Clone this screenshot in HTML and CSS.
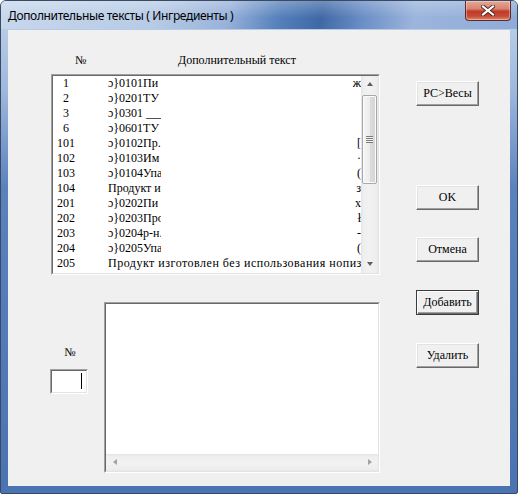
FILE: index.html
```html
<!DOCTYPE html>
<html lang="ru">
<head>
<meta charset="utf-8">
<title>Дополнительные тексты</title>
<link rel="stylesheet" href="styles.css">
</head>
<body>
<div class="window">
  <div class="titlebar">
    <span class="title">Дополнительные тексты ( Ингредиенты )</span>
    <div class="close">
      <svg width="14" height="11" viewBox="0 0 14 11">
        <path d="M2 1.5 L12 9.5 M12 1.5 L2 9.5" stroke="#4a2420" stroke-width="4" stroke-linecap="square"/>
        <path d="M2 1.5 L12 9.5 M12 1.5 L2 9.5" stroke="#ffffff" stroke-width="2.2" stroke-linecap="square"/>
      </svg>
    </div>
  </div>
  <div class="client">
    <div class="left">
      <div class="list-header">
        <span class="h-num">№</span>
        <span class="h-text">Дополнительный текст</span>
      </div>
      <div class="listbox">
        <div class="listbox-inner">
          <div class="rows">
            <div class="row"><span class="c-num">  1</span><span class="c-text">ɔ}0101Пи</span><span class="c-tail">ж</span></div>
            <div class="row"><span class="c-num">  2</span><span class="c-text">ɔ}0201ТУ</span><span class="c-tail"></span></div>
            <div class="row"><span class="c-num">  3</span><span class="c-text">ɔ}0301 ____</span><span class="c-tail"></span></div>
            <div class="row"><span class="c-num">  6</span><span class="c-text">ɔ}0601ТУ</span><span class="c-tail"></span></div>
            <div class="row"><span class="c-num">101</span><span class="c-text">ɔ}0102Пр.</span><span class="c-tail">[</span></div>
            <div class="row"><span class="c-num">102</span><span class="c-text">ɔ}0103Им</span><span class="c-tail">·</span></div>
            <div class="row"><span class="c-num">103</span><span class="c-text">ɔ}0104Упак</span><span class="c-tail">(</span></div>
            <div class="row"><span class="c-num">104</span><span class="c-text">Продукт из</span><span class="c-tail">з</span></div>
            <div class="row"><span class="c-num">201</span><span class="c-text">ɔ}0202Пи</span><span class="c-tail">х</span></div>
            <div class="row"><span class="c-num">202</span><span class="c-text">ɔ}0203Про</span><span class="c-tail">ł</span></div>
            <div class="row"><span class="c-num">203</span><span class="c-text">ɔ}0204р-н.</span><span class="c-tail">-</span></div>
            <div class="row"><span class="c-num">204</span><span class="c-text">ɔ}0205Упа</span><span class="c-tail">(</span></div>
            <div class="row"><span class="c-num">205</span><span class="c-full">Продукт изготовлен без использования нопиз</span></div>
            <div class="row"><span class="c-num">206</span><span class="c-text">ɔ}0206Пи</span><span class="c-tail">П</span></div>
          </div>
          <div class="vscroll">
            <div class="sb-btn"><span class="arr-up"></span></div>
            <div class="sb-track">
              <div class="thumb"><span class="grip"></span></div>
            </div>
            <div class="sb-btn"><span class="arr-down"></span></div>
          </div>
        </div>
      </div>
      <div class="bottom">
        <div class="numbox">
          <div class="num-label">№</div>
          <div class="edit"><div class="edit-inner"><span class="caret"></span></div></div>
        </div>
        <div class="memo">
          <div class="memo-inner">
            <div class="memo-area"></div>
            <div class="hscroll">
              <div class="hsb-btn"><span class="arr-left"></span></div>
              <div class="hsb-track"></div>
              <div class="hsb-btn"><span class="arr-right"></span></div>
            </div>
          </div>
        </div>
      </div>
    </div>
    <div class="buttons">
      <div class="btn b-pc">PC&gt;Весы</div>
      <div class="btn b-ok">OK</div>
      <div class="btn b-cancel">Отмена</div>
      <div class="btn btn-default b-add">Добавить</div>
      <div class="btn b-del">Удалить</div>
    </div>
  </div>
</div>
</body>
</html>
```

FILE: styles.css
```css
html, body {
  margin: 0;
  padding: 0;
  background: #ffffff;
}
body {
  width: 518px;
  height: 494px;
  overflow: hidden;
}
.window {
  box-sizing: border-box;
  width: 518px;
  height: 494px;
  border: 1px solid #3a4a63;
  border-radius: 6px 6px 2px 2px;
  background: linear-gradient(to bottom, #c3d4ea 0%, #9fb8dd 18%, #5a82bd 38%, #4a73b1 100%);
  padding: 0 7px 7px 7px;
  display: flex;
  flex-direction: column;
}
.titlebar {
  height: 28px;
  margin: 0 -7px;
  padding: 0 7px 0 7px;
  display: flex;
  justify-content: space-between;
  align-items: flex-start;
  border-radius: 5px 5px 0 0;
  background:
    linear-gradient(to bottom, rgba(255,255,255,0.25), rgba(255,255,255,0) 60%),
    linear-gradient(100deg, #c7d7ec 0%, #b7cbe6 30%, #98b2da 44%, #5580bb 54%, #3f69a6 62%, #6a8ec6 70%, #9bb5dc 80%, #8fabd7 100%);
}
.title {
  font-family: "Noto Sans", "DejaVu Sans", sans-serif;
  font-size: 12px;
  color: #000000;
  line-height: 16px;
  margin-top: 7px;
  letter-spacing: -0.35px;
}
.close {
  width: 46px;
  height: 20px;
  box-sizing: border-box;
  margin-right: -1px;
  border: 1px solid #5a2a24;
  border-top: none;
  border-radius: 0 0 4px 4px;
  background: linear-gradient(to bottom, #e6a796 0%, #d88670 40%, #c23a2a 55%, #c94a36 80%, #dd8a6d 100%);
  box-shadow: inset 0 0 0 1px rgba(255,255,255,0.35);
  display: flex;
  align-items: center;
  justify-content: center;
}
.close svg { display: block; }

.client {
  width: 502px;
  height: 457px;
  margin-top: 1px;
  background: #f0f0f0;
  display: flex;
  align-items: flex-start;
  padding: 23px 0 0 42px;
  box-sizing: border-box;
  font-family: "Liberation Serif", "Times New Roman", serif;
  font-size: 12px;
  color: #000000;
}
.left {
  width: 330px;
  display: flex;
  flex-direction: column;
}
.list-header {
  height: 15px;
  line-height: 15px;
  display: flex;
}
.h-num {
  width: 40px;
  padding-left: 25px;
  box-sizing: border-box;
}
.h-text {
  margin-left: 88px;
}
.listbox {
  margin-top: 6px;
  margin-left: 1px;
  width: 329px;
  height: 201px;
  box-sizing: border-box;
  border: 1px solid;
  border-color: #a0a0a0 #ffffff #ffffff #a0a0a0;
}
.listbox-inner {
  height: 100%;
  box-sizing: border-box;
  border: 1px solid;
  border-color: #696969 #e3e3e3 #e3e3e3 #696969;
  background: #ffffff;
  display: flex;
}
.rows {
  flex: 1;
  overflow: hidden;
  height: 197px;
}
.row {
  height: 15px;
  line-height: 15px;
  display: flex;
  white-space: pre;
}
.c-num {
  width: 55px;
  padding-left: 4px;
  box-sizing: border-box;
  flex: none;
}
.c-text {
  width: 53px;
  overflow: hidden;
  flex: none;
}
.c-tail {
  flex: 1;
  text-align: right;
  overflow: hidden;
}
.c-full {
  flex: 1;
  overflow: hidden;
  letter-spacing: 0.5px;
}
.vscroll {
  width: 17px;
  flex: none;
  display: flex;
  flex-direction: column;
  background: linear-gradient(to right, #e3e3e3 0px, #eeeeee 2px, #f2f2f2 8px, #eeeeee 15px, #e8e8e8 17px);
}
.sb-btn {
  height: 17px;
  display: flex;
  align-items: center;
  justify-content: center;
  flex: none;
}
.arr-up, .arr-down {
  width: 0;
  height: 0;
  border-left: 3.5px solid transparent;
  border-right: 3.5px solid transparent;
}
.arr-up { border-bottom: 4px solid #5e5e5e; }
.arr-down { border-top: 4px solid #5e5e5e; }
.sb-track {
  flex: 1;
  padding-top: 2px;
}
.thumb {
  margin-left: 1px;
  width: 15px;
  height: 89px;
  box-sizing: border-box;
  border: 1px solid #a8a8a8;
  border-radius: 2px;
  background: linear-gradient(to right, #f6f6f6 0%, #ececec 50%, #dcdcdc 51%, #d4d4d4 100%);
  box-shadow: inset 0 0 0 1px #fbfbfb;
  display: flex;
  align-items: center;
  justify-content: center;
}
.grip {
  width: 7px;
  height: 7px;
  background: repeating-linear-gradient(to bottom, #7b7b7b 0, #7b7b7b 1px, #f4f4f4 1px, #f4f4f4 2px);
}

.bottom {
  display: flex;
  margin-top: 27px;
}
.numbox {
  width: 54px;
  padding-top: 43px;
  flex: none;
}
.num-label {
  width: 40px;
  text-align: center;
  line-height: 14px;
  margin-bottom: 10px;
}
.edit {
  width: 38px;
  height: 25px;
  box-sizing: border-box;
  border: 1px solid;
  border-color: #a0a0a0 #ffffff #ffffff #a0a0a0;
}
.edit-inner {
  height: 100%;
  box-sizing: border-box;
  border: 1px solid;
  border-color: #696969 #e3e3e3 #e3e3e3 #696969;
  background: #ffffff;
  display: flex;
  justify-content: flex-end;
  align-items: center;
  padding-right: 4px;
}
.caret {
  width: 1px;
  height: 16px;
  background: #000000;
}
.memo {
  width: 276px;
  height: 171px;
  box-sizing: border-box;
  border: 1px solid;
  border-color: #a0a0a0 #ffffff #ffffff #a0a0a0;
}
.memo-inner {
  height: 100%;
  box-sizing: border-box;
  border: 1px solid;
  border-color: #696969 #e3e3e3 #e3e3e3 #696969;
  background: #ffffff;
  display: flex;
  flex-direction: column;
}
.memo-area { flex: 1; }
.hscroll {
  height: 17px;
  flex: none;
  display: flex;
  background: linear-gradient(to bottom, #e3e3e3 0px, #eeeeee 2px, #f2f2f2 8px, #eeeeee 15px, #e8e8e8 17px);
}
.hsb-btn {
  width: 17px;
  display: flex;
  align-items: center;
  justify-content: center;
}
.hsb-track { flex: 1; }
.arr-left, .arr-right {
  width: 0;
  height: 0;
  border-top: 3.5px solid transparent;
  border-bottom: 3.5px solid transparent;
}
.arr-left { border-right: 4px solid #a3a3a3; }
.arr-right { border-left: 4px solid #a3a3a3; }

.buttons {
  margin-left: 36px;
  margin-top: 28px;
  display: flex;
  flex-direction: column;
}
.btn {
  width: 63px;
  height: 25px;
  box-sizing: border-box;
  background: #f0f0f0;
  border: 1px solid;
  border-color: #ffffff #696969 #696969 #ffffff;
  box-shadow: inset -1px -1px 0 #a0a0a0, inset 1px 1px 0 #e3e3e3;
  display: flex;
  align-items: center;
  justify-content: center;
  line-height: 14px;
  padding-bottom: 1px;
}
.btn-default {
  border: 1px solid #3c3c3c;
  box-shadow: inset 1px 1px 0 #ffffff, inset -1px -1px 0 #696969, inset -2px -2px 0 #a0a0a0;
}
.b-ok { margin-top: 79px; }
.b-cancel { margin-top: 27px; }
.b-add { margin-top: 28px; }
.b-del { margin-top: 28px; }
```
